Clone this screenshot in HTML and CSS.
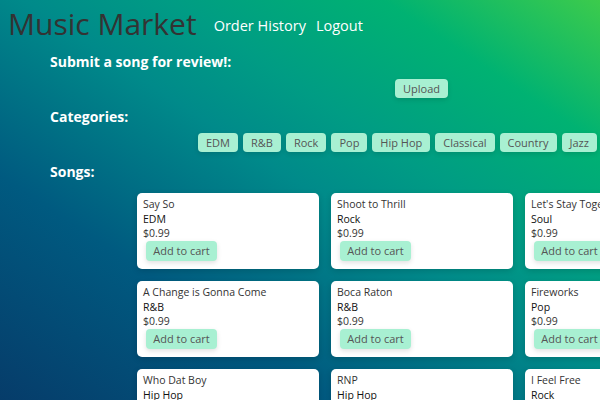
FILE: index.html
```html
<!DOCTYPE html>
<html>
<head>
<meta charset="utf-8">
<link rel="stylesheet" href="styles.css">
</head>
<body>
<div class="page">
  <header class="topbar">
    <h1 class="brand">Music Market</h1>
    <nav class="nav">
      <a class="nav-link">Order History</a>
      <a class="nav-link">Logout</a>
    </nav>
  </header>
  <section class="section">
    <h2 class="heading">Submit a song for review!:</h2>
    <div class="upload-row"><button class="btn">Upload</button></div>
  </section>
  <section class="section">
    <h2 class="heading">Categories:</h2>
    <div class="cats">
      <button class="btn">EDM</button>
      <button class="btn">R&amp;B</button>
      <button class="btn">Rock</button>
      <button class="btn">Pop</button>
      <button class="btn">Hip Hop</button>
      <button class="btn">Classical</button>
      <button class="btn">Country</button>
      <button class="btn">Jazz</button>
    </div>
  </section>
  <section class="section">
    <h2 class="heading">Songs:</h2>
    <div class="songs">
      <div class="card"><div class="t">Say So</div><div class="g">EDM</div><div class="p">$0.99</div><button class="btn cart">Add to cart</button></div>
      <div class="card"><div class="t">Shoot to Thrill</div><div class="g">Rock</div><div class="p">$0.99</div><button class="btn cart">Add to cart</button></div>
      <div class="card"><div class="t">Let's Stay Together</div><div class="g">Soul</div><div class="p">$0.99</div><button class="btn cart">Add to cart</button></div>
      <div class="card"><div class="t">A Change is Gonna Come</div><div class="g">R&amp;B</div><div class="p">$0.99</div><button class="btn cart">Add to cart</button></div>
      <div class="card"><div class="t">Boca Raton</div><div class="g">R&amp;B</div><div class="p">$0.99</div><button class="btn cart">Add to cart</button></div>
      <div class="card"><div class="t">Fireworks</div><div class="g">Pop</div><div class="p">$0.99</div><button class="btn cart">Add to cart</button></div>
      <div class="card"><div class="t">Who Dat Boy</div><div class="g">Hip Hop</div><div class="p">$0.99</div><button class="btn cart">Add to cart</button></div>
      <div class="card"><div class="t">RNP</div><div class="g">Hip Hop</div><div class="p">$0.99</div><button class="btn cart">Add to cart</button></div>
      <div class="card"><div class="t">I Feel Free</div><div class="g">Rock</div><div class="p">$0.99</div><button class="btn cart">Add to cart</button></div>
    </div>
  </section>
</div>
</body>
</html>
```
FILE: styles.css
```css
html, body {
  margin: 0;
  padding: 0;
  height: 400px;
  overflow: hidden;
}
body {
  font-family: "Open Sans", "Liberation Sans", sans-serif;
  background: linear-gradient(to right top, #063c6a 0%, #005a80 28%, #008a8a 52%, #009c84 64%, #00b272 82%, #3ccb4c 100%);
  color: #fff;
}
.page {
  width: 600px;
  height: 400px;
  overflow: hidden;
}
.topbar {
  display: flex;
  align-items: center;
  height: 50px;
  padding-left: 8px;
}
.brand {
  margin: 0 0 4px 0;
  font-size: 30px;
  font-weight: 500;
  color: #333;
}
.nav {
  display: flex;
  gap: 10px;
  margin-left: 17px;
}
.nav-link {
  color: #fff;
  font-size: 14.5px;
}
.section {
  padding-left: 50px;
}
.heading {
  margin: 0;
  font-size: 14px;
  font-weight: 700;
  line-height: 24px;
}
.upload-row {
  padding-left: 345px;
  padding-top: 2px;
  height: 29px;
}
.btn {
  font-family: inherit;
  font-size: 11px;
  color: #555;
  background: #a8f0d2;
  border: none;
  border-radius: 4px;
  height: 19px;
  padding: 0 8px;
  box-shadow: 0 2px 5px rgba(0,0,0,0.12);
}
.cats {
  display: flex;
  gap: 5px;
  padding-left: 148px;
  padding-top: 4px;
  height: 27px;
}
.cats .btn {
  flex: none;
}
.songs {
  display: grid;
  grid-template-columns: 182px 182px 182px;
  gap: 12px;
  padding-left: 87px;
  padding-top: 9px;
}
.card {
  background: #fff;
  border-radius: 5px;
  height: 76px;
  padding: 4px 0 0 6px;
  box-sizing: border-box;
  color: #222;
  font-size: 10.5px;
  line-height: 14.5px;
  box-shadow: 0 2px 6px rgba(0,0,0,0.15);
}
.card .t, .card .p {
  color: #333;
}
.card .g {
  color: #111;
}
.card .cart {
  margin-top: 0;
  margin-left: 3px;
  height: 20px;
  width: 71px;
  padding: 0;
  font-size: 11px;
}
```
